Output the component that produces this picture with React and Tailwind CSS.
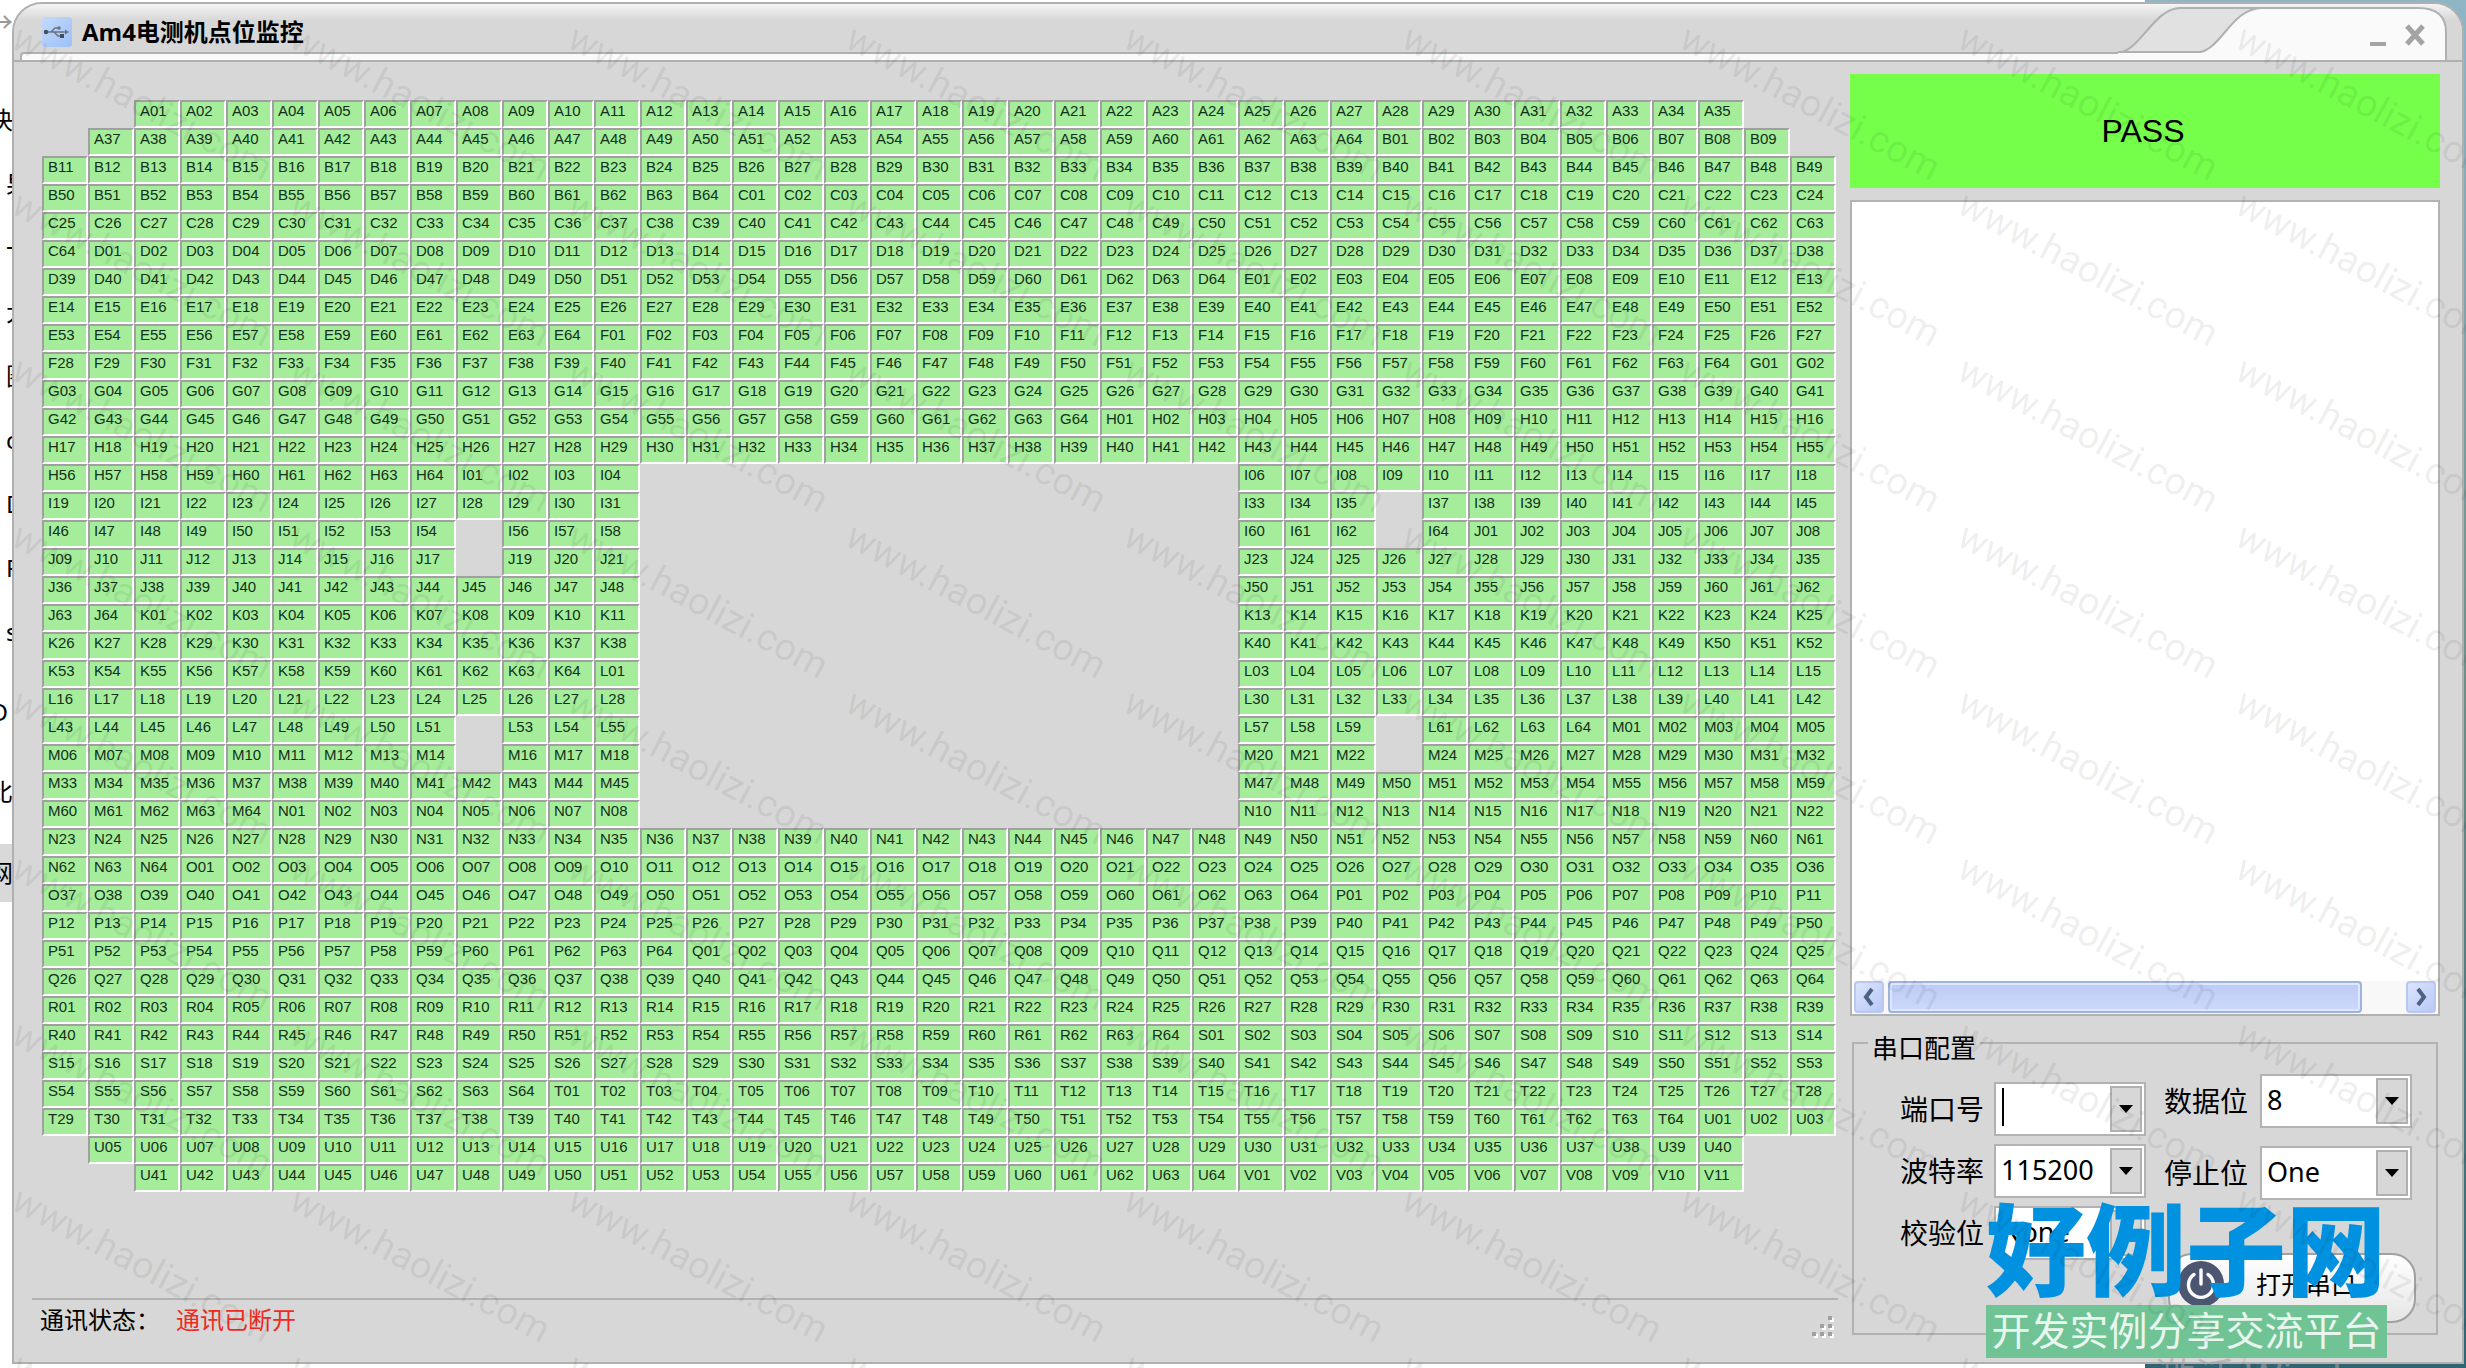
import clsx from "clsx";

const COLS = 39;
const ROWS = 39;
const PINS_PER_BANK = 64;

// Each segment is [firstColumn, lastColumn]; everything outside is a hole.
const segmentsFor = (row) => {
  if (row === 0) return [[2, 36]];
  if (row === 1) return [[1, 37]];
  if (row === 37) return [[1, 36]];
  if (row === 38) return [[2, 36]];
  if (row < 13 || row > 25) return [[0, 38]];

  const left = [15, 16, 22, 23].includes(row) ? [[0, 8], [10, 12]] : [[0, 12]];
  const right = [14, 15, 22, 23].includes(row) ? [[26, 28], [30, 38]] : [[26, 38]];
  return [...left, ...right];
};

const pinLabel = (n) => {
  const bank = String.fromCharCode(65 + Math.floor(n / PINS_PER_BANK));
  return bank + String((n % PINS_PER_BANK) + 1).padStart(2, "0");
};

const buildPins = () => {
  const cells = Array(ROWS * COLS).fill(null);
  let n = 0;
  for (let row = 0; row < ROWS; row++) {
    segmentsFor(row).forEach(([from, to], i) => {
      // a hole inside a row uses up one pin number
      if (i > 0) n++;
      for (let col = from; col <= to; col++) {
        cells[row * COLS + col] = pinLabel(n++);
      }
    });
    if (row === 0 || row === 1 || row === 36) n++;
  }
  return cells;
};

const pins = buildPins();

const PinGrid = () => (
  <div className="grid grid-cols-[repeat(39,minmax(0,1fr))] font-['Liberation_Sans',sans-serif] text-[15px] leading-[18px] text-[#12301a]">
    {pins.map((pin, i) => (
      <div
        key={i}
        className={clsx(
          "h-7",
          pin &&
            "border-2 border-t-[#a0a0a0] border-r-white border-b-white border-l-[#a0a0a0] bg-[#a6ed9b] pl-1"
        )}
      >
        {pin}
      </div>
    ))}
  </div>
);

const Watermark = () => (
  <div
    aria-hidden="true"
    className="pointer-events-none absolute inset-0 z-30 overflow-hidden pt-[18px] pl-6"
  >
    <div className="grid w-[2502px] grid-cols-[repeat(9,278px)] auto-rows-[166px] font-['Roboto',sans-serif] text-[38px] leading-[38px] text-black/8">
      {Array.from({ length: 81 }, (_, i) => (
        <span key={i} className="origin-top-left rotate-28 whitespace-nowrap">
          www.haolizi.com
        </span>
      ))}
    </div>
  </div>
);

const leftWords = ["果", "一", "大", "圈", "c", "D", "F", "s"];

const Backdrop = () => (
  <div aria-hidden="true" className="absolute inset-0 overflow-hidden bg-white">
    <div className="absolute top-0 right-0 bottom-0 w-[321px] bg-linear-to-b from-[#8fb6c6] via-[#6f8f86] to-[#2f6471]" />
    <div className="absolute top-0 left-0 flex w-[13px] flex-col overflow-hidden text-2xl text-black">
      <span className="h-[88px] self-end text-[28px] leading-[44px] text-[#999]">→</span>
      <span className="h-16 self-end leading-[64px]">决</span>
      {leftWords.map((word, i) => (
        <span key={i} className="h-16 pl-[6px] leading-[64px]">
          {word}
        </span>
      ))}
      <span className="mt-4 mr-[5px] h-16 self-end leading-[64px]">D</span>
      <span className="mt-4 h-16 self-end leading-[64px]">比</span>
      <span className="mt-5 h-[58px] self-end bg-[#d9d9d9] leading-[58px]">网</span>
    </div>
  </div>
);

const UsbIcon = () => (
  <svg viewBox="0 0 30 30" className="h-[30px] w-[30px]">
    <defs>
      <linearGradient id="usb-bg" x1="0" y1="0" x2="1" y2="1">
        <stop offset="0" stopColor="#c3dafc" />
        <stop offset="1" stopColor="#9dc0f5" />
      </linearGradient>
    </defs>
    <rect width="30" height="30" rx="3" fill="url(#usb-bg)" />
    <g stroke="#6b7482" strokeWidth="1.6" fill="none">
      <path d="M4 15h20M9 15l4-4h4M12 15l4 4h3" />
    </g>
    <circle cx="4" cy="15" r="2.2" fill="#454d5a" />
    <circle cx="17" cy="11" r="1.8" fill="#6b7482" />
    <rect x="18" y="17" width="4" height="4" fill="#454d5a" />
    <path d="M23 12.5l4 2.5-4 2.5z" fill="#6b7482" />
  </svg>
);

const TitleBar = () => (
  <header className="relative flex h-[58px] items-center border-b-2 border-[#b0b0b0] bg-linear-to-b from-[#f4f4f4] to-[#d7d7d7] to-30% pl-7">
    <div className="absolute right-0 bottom-0 left-[6px] h-2 rounded-tl border-t-2 border-l-2 border-[#b0b0b0] bg-[#fafafa]" />
    <div className="z-10 flex items-center gap-[10px]">
      <UsbIcon />
      <h1 className="font-['Open_Sans','Noto_Sans_CJK_SC',sans-serif] text-2xl font-bold text-black">
        Am4电测机点位监控
      </h1>
    </div>
    <svg viewBox="0 0 344 58" className="absolute right-0 bottom-0 h-[58px] w-[344px]">
      <path d="M4 50C24 44 38 6 62 6H150V50z" fill="#e1e1e1" stroke="#b0b0b0" strokeWidth="2" />
      <path
        d="M0 58V51H82C104 46 114 6 144 6H300Q328 6 328 30V58z"
        fill="#fafafa"
      />
      <path
        d="M0 50H82C104 46 114 6 144 6H300Q328 6 328 30V58"
        fill="none"
        stroke="#b0b0b0"
        strokeWidth="2"
      />
      <rect x="329" y="20" width="15" height="38" fill="#d7d7d7" />
    </svg>
    <div className="absolute right-[36px] bottom-[14px] flex items-end gap-4">
      <button aria-label="最小化" className="flex h-6 w-5 items-end justify-center">
        <span className="h-1 w-4 bg-[#a4a4a4]" />
      </button>
      <button aria-label="关闭" className="h-[22px] w-[22px]">
        <svg viewBox="0 0 22 20" className="h-full w-full">
          <path d="M3 1l16 18M19 1L3 19" stroke="#a4a4a4" strokeWidth="5" />
        </svg>
      </button>
    </div>
  </header>
);

const ScrollButton = ({ label, d }) => (
  <button
    aria-label={label}
    className="flex h-8 w-[30px] items-center justify-center rounded-sm border-2 border-[#b9c8f0] bg-linear-to-br from-[#dbe4fd] to-[#b9c9f6]"
  >
    <svg viewBox="0 0 12 20" className="h-5 w-3">
      <path d={d} fill="none" stroke="#4d6185" strokeWidth="4" />
    </svg>
  </button>
);

const LogBox = () => (
  <div className="flex h-[816px] flex-col justify-end border-2 border-[#b2b2b2] bg-white px-[2px]">
    <div className="flex h-[33px] gap-1 bg-[#f8f8f8]">
      <ScrollButton label="向左" d="M9 2L3 10l6 8" />
      <div className="mr-10 h-8 flex-1 rounded-sm border-2 border-[#9db3e2] bg-linear-to-b from-[#bccbf6] to-[#cdd9fb] shadow-[inset_0_0_0_2px_#dfe7ff]" />
      <ScrollButton label="向右" d="M3 2l6 8-6 8" />
    </div>
  </div>
);

const Combo = ({ id, label, options = [], caret }) => (
  <div className="flex items-center justify-between">
    <label htmlFor={id} className="text-[28px] leading-none">
      {label}
    </label>
    <div className="relative h-[54px] w-[152px] border-2 border-[#b2b2b2] bg-white">
      <select
        id={id}
        className="h-full w-full appearance-none pb-1 pl-[5px] text-[27px] leading-none outline-none"
      >
        {options.map((option) => (
          <option key={option}>{option}</option>
        ))}
      </select>
      {caret && <span className="absolute top-1 left-[6px] h-[38px] w-[2px] bg-black" />}
      <span className="pointer-events-none absolute top-[2px] right-[2px] bottom-[2px] flex w-8 items-center justify-center border-2 border-[#b0b0b0] bg-[#d7d7d7]">
        <svg viewBox="0 0 14 8" className="h-2 w-[14px]">
          <path d="M0 0h14L7 8z" />
        </svg>
      </span>
    </div>
  </div>
);

const PowerIcon = () => (
  <svg viewBox="0 0 46 46" className="h-[46px] w-[46px]">
    <circle cx="23" cy="23" r="23" fill="#4d5670" />
    <g fill="none" stroke="#fff" strokeWidth="3.4" strokeLinecap="round">
      <path d="M16 13.5a12.5 12.5 0 1 0 14 0" />
      <path d="M23 9v14" />
    </g>
  </svg>
);

const SerialConfig = () => (
  <fieldset className="relative mt-2 ml-[2px] mr-[2px] h-[311px] border-2 border-[#b2b2b2] px-6">
    <legend className="-ml-[10px] px-1 pt-[10px] text-[26px] leading-[28px]">串口配置</legend>
    <div className="flex gap-[18px] pl-[22px]">
      <div className="flex w-[246px] flex-col gap-2 pt-5">
        <Combo id="port" label="端口号" options={[""]} caret />
        <Combo id="baud" label="波特率" options={["115200"]} />
        <Combo id="parity" label="校验位" options={["None"]} />
      </div>
      <div className="flex w-[248px] flex-col gap-[18px] pt-3">
        <Combo id="data" label="数据位" options={["8"]} />
        <Combo id="stop" label="停止位" options={["One"]} />
      </div>
    </div>
    <button className="absolute right-5 bottom-[10px] flex h-[70px] w-[248px] items-center gap-8 rounded-3xl border-2 border-[#a0a0a0] bg-linear-to-b from-white to-[#e6e6e6] pb-2 pl-2 text-[25px] leading-none">
      <PowerIcon />
      打开串口
    </button>
  </fieldset>
);

const SiteLogo = () => (
  <div className="pointer-events-none absolute right-[79px] bottom-[10px] z-20 w-[401px]">
    <div className="h-[108px] text-[100px] leading-[104px] font-black whitespace-nowrap text-[#0092e0]">
      好例子网
    </div>
    <div className="h-[53px] bg-[#6fc394] text-center text-[39px] leading-[49px] whitespace-nowrap text-white/85">
      开发实例分享交流平台
    </div>
  </div>
);

const StatusBar = () => (
  <footer className="flex h-16 items-start justify-between border-t-2 border-[#b2b2b2] pt-[6px] pr-1 pl-2 text-2xl leading-7">
    <p>
      通讯状态：<span className="pl-4 text-[#f02a1e]">通讯已断开</span>
    </p>
    <svg viewBox="0 0 24 24" className="mt-[10px] h-6 w-6">
      {[[18, 0], [10, 8], [18, 8], [2, 16], [10, 16], [18, 16]].map(([x, y]) => (
        <g key={`${x}-${y}`}>
          <rect x={x + 2} y={y + 2} width="4" height="4" fill="#fff" />
          <rect x={x} y={y} width="4" height="4" fill="#a0a0a0" />
        </g>
      ))}
    </svg>
  </footer>
);

export default function App() {
  return (
    <div className="relative min-h-screen overflow-hidden pt-[2px] pr-[2px] pb-1 pl-3 font-['Noto_Sans','Noto_Sans_CJK_SC',sans-serif] text-black">
      <Backdrop />
      <main className="relative flex min-h-[1362px] flex-col overflow-hidden rounded-t-[30px] border-2 border-[#b0b0b0] bg-[#d7d7d7]">
        <TitleBar />
        <div className="flex flex-1 pr-[22px] pl-[18px]">
          <section className="flex flex-1 flex-col justify-between">
            <div className="pt-[38px] pr-[2px] pl-[10px]">
              <PinGrid />
            </div>
            <StatusBar />
          </section>
          <aside className="ml-3 w-[590px] pt-3">
            <div className="mb-3 flex h-[114px] items-center justify-center bg-[#75ff4b] pr-1 font-['Liberation_Sans',sans-serif] text-[32px]">
              PASS
            </div>
            <LogBox />
            <SerialConfig />
          </aside>
        </div>
      </main>
      {/* desktop activation notice, mostly below the screen edge */}
      <p className="pointer-events-none absolute right-[50px] -bottom-[36px] z-10 text-[40px] leading-[54px] whitespace-nowrap text-[#a4a4a4]/60">
        激活 Windows
      </p>
      <SiteLogo />
      <Watermark />
    </div>
  );
}
